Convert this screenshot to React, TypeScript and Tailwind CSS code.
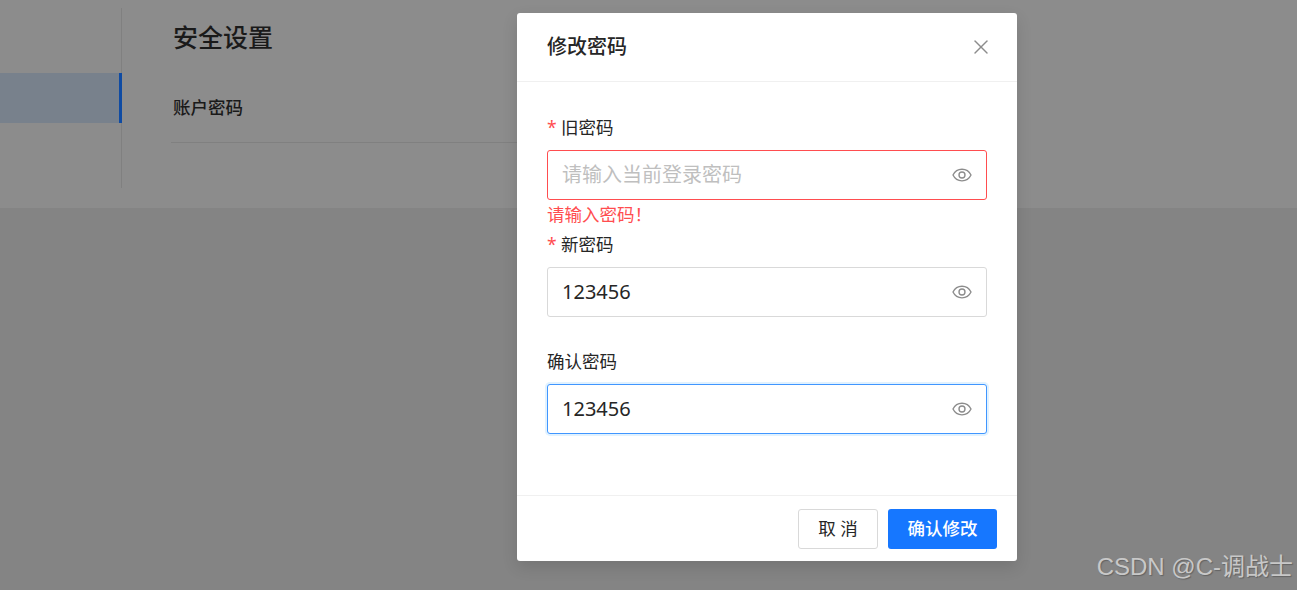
import React from "react";
import { X } from "lucide-react";

const font = "font-['Noto_Sans','Noto_Sans_CJK_SC',sans-serif]";

const EyeIcon = () => (
  <svg viewBox="0 0 20 20" className="h-5 w-5 text-[#8c8c8c]" fill="none" stroke="currentColor" strokeWidth="1.35">
    <path d="M1 10c1.9-3.9 5-5.8 9-5.8s7.100 1.900 9 5.800c-1.900 3.900-5 5.800-9 5.800S2.900 13.900 1 10z" />
    <circle cx="10" cy="10" r="3" />
  </svg>
);

interface FieldProps {
  label: string;
  required?: boolean;
  value?: string;
  placeholder?: string;
  error?: string;
  focused?: boolean;
  className?: string;
}

const PasswordField: React.FC<FieldProps> = ({ label, required, value, placeholder, error, focused, className }) => {
  const borderClass = error
    ? "border-[#ff4d4f]"
    : focused
      ? "border-[#4096ff] shadow-[0_0_0_2px_rgba(5,145,255,0.12)]"
      : "border-[#d9d9d9]";
  return (
    <div className={className}>
      <div className="flex h-[23px] items-center text-[17.5px] leading-[23px] text-[#262626]">
        {required && <span className="mr-[5px] w-[9px] text-[#ff4d4f]">*</span>}
        {label}
      </div>
      <div className={`mt-[11px] flex h-[50px] items-center justify-between rounded-[3px] border bg-white pl-[14px] pr-[14px] ${borderClass}`}>
        {value ? (
          <span className="text-[20px] text-[#262626]">{value}</span>
        ) : (
          <span className="text-[20px] text-[#bfbfbf]">{placeholder}</span>
        )}
        <EyeIcon />
      </div>
      {error && <div className="mt-[3px] h-[23px] text-[17.5px] leading-[23px] text-[#ff4d4f]">{error}</div>}
    </div>
  );
};

export default function App() {
  return (
    <div className={`relative h-[590px] w-[1297px] overflow-hidden bg-[#848484] ${font}`}>
      {/* Page behind the mask */}
      <div className="h-[208px] bg-[#8c8c8c] pt-2">
        <div className="flex">
          <aside className="h-[180px] w-[122px] border-r border-[#808080] pt-[65px]">
            <div className="-mr-px h-[50px] border-r-[3px] border-[#0f4ba3] bg-[#78818c]" />
          </aside>
          <main className="ml-[49px] flex-1">
            <h1 className="ml-[2px] text-[25px] font-medium leading-[58px] text-[#1a1a1a]">安全设置</h1>
            <div className="mt-[6px] h-[71px] w-[400px] border-b border-[#808080] pt-[12px]">
              <span className="ml-[2px] text-[17.5px] font-medium leading-[46px] text-[#1a1a1a]">账户密码</span>
            </div>
          </main>
        </div>
      </div>

      {/* Modal */}
      <div className="absolute left-[517px] top-[13px] flex h-[548px] w-[500px] flex-col rounded-[3px] bg-white shadow-[0_6px_16px_rgba(0,0,0,0.12)]">
        <header className="flex h-[69px] items-center justify-between border-b border-[#f0f0f0] pl-[30px] pr-[24px]">
          <h2 className="text-[20px] font-medium text-[#262626]">修改密码</h2>
          <X className="h-6 w-6 text-[#8c8c8c]" strokeWidth={1.4} />
        </header>
        <div className="flex-1 px-[30px] pt-[34px]">
          <PasswordField label="旧密码" required placeholder="请输入当前登录密码" error="请输入密码！" />
          <PasswordField label="新密码" required value="123456" className="mt-[7px]" />
          <PasswordField label="确认密码" value="123456" focused className="mt-[33px]" />
        </div>
        <footer className="flex h-[66px] items-center justify-end gap-[10px] border-t border-[#f0f0f0] pr-[20px]">
          <button className="h-10 w-20 rounded-[3px] border border-[#d9d9d9] bg-white text-[17.5px] text-[#262626]">取 消</button>
          <button className="h-10 w-[109px] rounded-[3px] bg-[#1677ff] text-[17.5px] font-medium text-white">确认修改</button>
        </footer>
      </div>

      {/* Watermark */}
      <div className="absolute bottom-[3px] right-[4px] font-['Liberation_Sans','Noto_Sans_CJK_SC',sans-serif] text-[24px] leading-[40px] text-[#c8c8c8] [text-shadow:1px_1px_1px_rgba(0,0,0,0.25)]">
        CSDN @C-调战士
      </div>
    </div>
  );
}
